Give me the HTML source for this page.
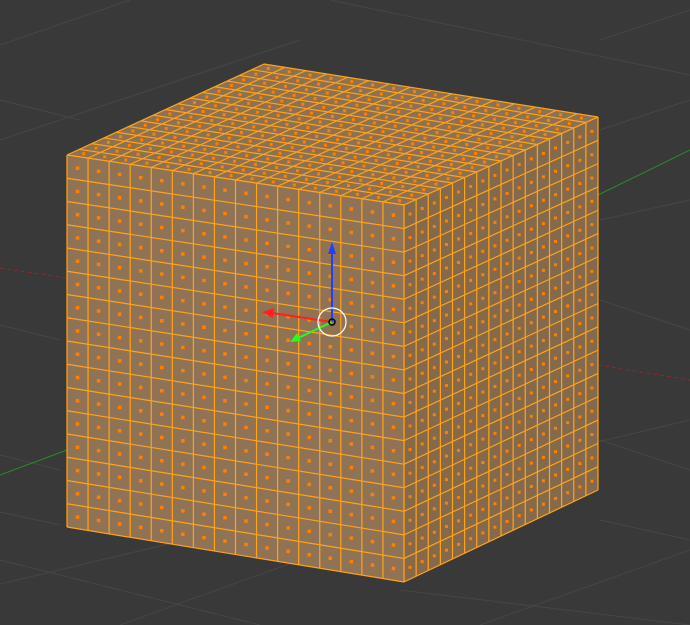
<html><head><style>body{margin:0;background:#393939;overflow:hidden}svg{display:block}</style></head><body>
<svg id="s" width="690" height="625" xmlns="http://www.w3.org/2000/svg">
<rect width="690" height="625" fill="#393939"/>
<g stroke="#464646" stroke-width="1" fill="none">
<line x1="0" y1="45" x2="130" y2="0"/><line x1="0" y1="140" x2="300" y2="40"/><line x1="330" y1="0" x2="690" y2="75"/>
<line x1="0" y1="100" x2="80" y2="120"/><line x1="600" y1="40" x2="690" y2="10"/><line x1="600" y1="130" x2="690" y2="100"/>
<line x1="0" y1="325" x2="60" y2="340"/><line x1="0" y1="455" x2="60" y2="470"/><line x1="0" y1="584" x2="690" y2="420"/>
<line x1="0" y1="560" x2="260" y2="625"/><line x1="0" y1="512" x2="60" y2="525"/><line x1="120" y1="625" x2="300" y2="560"/>
<line x1="400" y1="590" x2="690" y2="625"/><line x1="600" y1="520" x2="690" y2="540"/><line x1="600" y1="440" x2="690" y2="470"/>
<line x1="480" y1="625" x2="690" y2="550"/><line x1="600" y1="220" x2="690" y2="200"/><line x1="600" y1="300" x2="690" y2="330"/>
</g>
<line x1="0" y1="268" x2="67" y2="278" stroke="#8a2a2a" stroke-dasharray="4 3"/>
<line x1="598" y1="365" x2="690" y2="380" stroke="#8a2a2a" stroke-dasharray="4 3"/>
<line x1="0" y1="475" x2="67" y2="450" stroke="#2a8a2a"/>
<line x1="598" y1="195" x2="690" y2="150" stroke="#2a8a2a"/>
<g id="c"></g>
<g>
<line x1="332" y1="322" x2="332" y2="252" stroke="#2040ff" stroke-width="2"/>
<polygon points="332,242 328,254 336,254" fill="#2040ff"/>
<line x1="332" y1="322" x2="272" y2="313" stroke="#ff2020" stroke-width="2"/>
<polygon points="262,312 274,308 273,318" fill="#ff2020"/>
<line x1="332" y1="322" x2="298" y2="338" stroke="#20ff20" stroke-width="2"/>
<polygon points="290,342 297,333 301,341" fill="#20ff20"/>
<circle cx="332" cy="322" r="14" fill="none" stroke="#fff" stroke-width="1.2"/>
<circle cx="332" cy="322" r="3" fill="none" stroke="#000" stroke-width="1.5"/>
</g>
</svg>
<script>
const g=document.getElementById('c');let h='';
function L(a,b,t){return[a[0]+(b[0]-a[0])*t,a[1]+(b[1]-a[1])*t]}
function face(p0,p1,p2,p3,n,m,fill,ds){
h+=`<polygon points="${[p0,p1,p2,p3].map(p=>p.join(',')).join(' ')}" fill="${fill}"/>`;
for(let i=0;i<n;i++)for(let j=0;j<m;j++){const u=(i+.5)/n,v=(j+.5)/m;const a=L(p0,p1,u),b=L(p3,p2,u),c=L(a,b,v);h+=`<rect x="${c[0]-ds/2}" y="${c[1]-ds/2}" width="${ds}" height="${ds}" fill="#ff8000"/>`;}
for(let i=0;i<=n;i++){const a=L(p0,p1,i/n),b=L(p3,p2,i/n);h+=`<line x1="${a[0]}" y1="${a[1]}" x2="${b[0]}" y2="${b[1]}" stroke="#ffa31a" stroke-width="1.2"/>`;}
for(let j=0;j<=m;j++){const a=L(p0,p3,j/m),b=L(p1,p2,j/m);h+=`<line x1="${a[0]}" y1="${a[1]}" x2="${b[0]}" y2="${b[1]}" stroke="#ffa31a" stroke-width="1.2"/>`;}
}
const FTL=[67,155],FTR=[404,205],FBR=[404,582],FBL=[67,527],BTR=[598,117],BBR=[598,490],BTL=[264,64];
face(BTL,BTR,FTR,FTL,16,16,'#8e7150',3);
face(FTR,BTR,BBR,FBR,16,16,'#85694b',3);
face(FTL,FTR,FBR,FBL,16,16,'#907354',3.5);
g.innerHTML=h;
</script>
</body></html>
